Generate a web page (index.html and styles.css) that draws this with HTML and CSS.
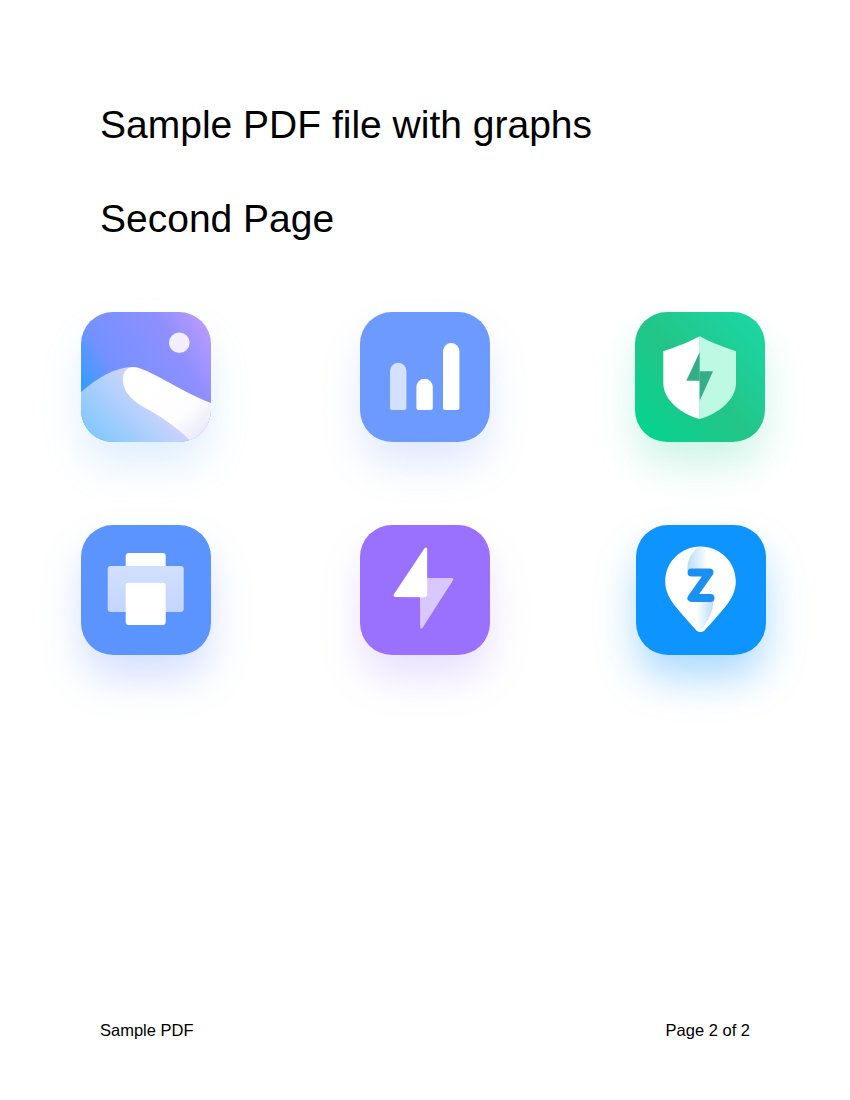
FILE: index.html
```html
<!DOCTYPE html>
<html lang="en">
<head>
<meta charset="utf-8">
<title>Sample PDF file with graphs</title>
<link rel="stylesheet" href="styles.css">
</head>
<body>
<main class="page">
  <header class="heading">
    <h1 class="title">Sample PDF file with graphs</h1>
    <h2 class="title title-second">Second Page</h2>
  </header>
  <section class="icons">
    <div class="tile tile-photo">
      <svg viewBox="0 0 130 130" class="art">
        <defs>
          <linearGradient id="skyG" x1="0" y1="70" x2="120" y2="0" gradientUnits="userSpaceOnUse">
            <stop offset="0" stop-color="#359dff"/><stop offset="0.25" stop-color="#7591ff"/><stop offset="0.72" stop-color="#8f8fff"/><stop offset="1" stop-color="#bb9bff"/>
          </linearGradient>
          <linearGradient id="duneG" x1="15" y1="125" x2="70" y2="70" gradientUnits="userSpaceOnUse">
            <stop offset="0" stop-color="#84c8ff"/><stop offset="1" stop-color="#d8d6fb"/>
          </linearGradient>
          <linearGradient id="frontG" x1="70" y1="70" x2="120" y2="125" gradientUnits="userSpaceOnUse">
            <stop offset="0" stop-color="#ffffff"/><stop offset="0.6" stop-color="#fdfdff"/><stop offset="1" stop-color="#e9e9fd"/>
          </linearGradient>
        </defs>
        <rect width="130" height="130" fill="url(#skyG)"/>
        <circle cx="98.3" cy="30.7" r="10.3" fill="#f3eefc"/>
        <path d="M0 80C16 66 34 55 52 55L90 90L120 130H0Z" fill="url(#duneG)"/>
        <path d="M52 55C66 55 100 80 130 91V130H111C96 116 84 107 68 98C52 90 42 80 42 68C42 60 46 55 52 55Z" fill="url(#frontG)"/>
      </svg>
    </div>
    <div class="tile tile-chart">
      <svg viewBox="0 0 130 130" class="art">
        <rect width="130" height="130" fill="#6d9aff"/>
        <path d="M30 59a8.2 8.2 0 0 1 16.4 0V96a2 2 0 0 1-2 2H32a2 2 0 0 1-2-2Z" fill="#d3e0ff"/>
        <path d="M56.4 75a8.2 8.2 0 0 1 16.4 0V96a2 2 0 0 1-2 2H58.4a2 2 0 0 1-2-2Z" fill="#fff"/>
        <path d="M83 39.2a8.2 8.2 0 0 1 16.4 0V96a2 2 0 0 1-2 2H85a2 2 0 0 1-2-2Z" fill="#fff"/>
      </svg>
    </div>
    <div class="tile tile-shield">
      <svg viewBox="0 0 130 130" class="art">
        <defs>
          <linearGradient id="shieldG" x1="10" y1="115" x2="125" y2="10" gradientUnits="userSpaceOnUse">
            <stop offset="0" stop-color="#08d28f"/><stop offset="0.45" stop-color="#23c588"/><stop offset="1" stop-color="#1bd6a3"/>
          </linearGradient>
        </defs>
        <rect width="130" height="130" fill="url(#shieldG)"/>
        <path d="M64.7 24.3C56 29 42 35 28.3 39.3V71C28.3 88 46 102 64.7 107Z" fill="#fff"/>
        <path d="M64.7 24.3C73 29 88 35 101 39.3V71C101 88 83 102 64.7 107Z" fill="#bdf9e3"/>
        <path d="M64.7 40L51.3 68.7H64.7Z" fill="#35ae88"/>
        <path d="M64.7 59.3H78L64.7 88.7Z" fill="#35ae88"/>
      </svg>
    </div>
    <div class="tile tile-print">
      <svg viewBox="0 0 130 130" class="art">
        <defs>
          <linearGradient id="trayG" x1="0" y1="41" x2="0" y2="87" gradientUnits="userSpaceOnUse">
            <stop offset="0" stop-color="#d2e0ff"/><stop offset="1" stop-color="#c3d5ff"/>
          </linearGradient>
        </defs>
        <rect width="130" height="130" fill="#5b94ff"/>
        <rect x="44.7" y="28" width="40" height="20" rx="3" fill="#fff"/>
        <rect x="26.7" y="41" width="76" height="46" rx="3" fill="url(#trayG)"/>
        <rect x="44.7" y="57.7" width="40" height="42.3" rx="3" fill="#fff"/>
      </svg>
    </div>
    <div class="tile tile-bolt">
      <svg viewBox="0 0 130 130" class="art">
        <rect width="130" height="130" fill="#9a71ff"/>
        <path d="M67 53H92Q94.2 53 93.2 55L62.4 103Q60.6 104.6 60.2 102.4L60 72H67Z" fill="#d9c8ff"/>
        <path d="M64.4 23.6Q67 21 67.2 24.4V70Q67.2 72.3 65 72.3L35.6 72Q32.8 71.6 33.9 69.2Z" fill="#fff"/>
      </svg>
    </div>
    <div class="tile tile-pin">
      <svg viewBox="0 0 130 130" class="art">
        <defs>
          <linearGradient id="pinTop" x1="51" y1="0" x2="72" y2="0" gradientUnits="userSpaceOnUse">
            <stop offset="0" stop-color="#b8dcfa"/><stop offset="1" stop-color="#ffffff"/>
          </linearGradient>
          <linearGradient id="pinBottom" x1="60" y1="0" x2="78" y2="0" gradientUnits="userSpaceOnUse">
            <stop offset="0" stop-color="#ffffff"/><stop offset="1" stop-color="#b8dcfa"/>
          </linearGradient>
        </defs>
        <rect width="130" height="130" fill="#0d94ff"/>
        <path d="M64.5 21.5C84 21.5 99.8 37 99.8 56.5C99.8 66 95.5 74 89.5 81.5C82.5 90 75.5 98 69 105C66.5 107.8 62.5 107.8 60 105C53.5 98 46.5 90 39.5 81.5C33.5 74 29.2 66 29.2 56.5C29.2 37 45 21.5 64.5 21.5Z" fill="#fff"/>
        <path d="M62.5 22C54 28 50.5 38 51.5 46H76C76 36 72 28 66 22Z" fill="url(#pinTop)"/>
        <path d="M60 74H77.5C77.5 88 71 98 64 106C62 106 60 105 60 105Z" fill="url(#pinBottom)"/>
        <path d="M55.5 47.5H73.5L55.5 73H74.5" class="zed"/>
      </svg>
    </div>
  </section>
  <footer class="footer">
    <span>Sample PDF</span>
    <span>Page 2 of 2</span>
  </footer>
</main>
</body>
</html>
```
FILE: styles.css
```css
html, body {
  margin: 0;
  padding: 0;
  background: #fff;
}

.page {
  width: 850px;
  height: 1100px;
  display: flex;
  flex-direction: column;
  font-family: "Liberation Sans", Arial, sans-serif;
  color: #000;
}

.heading {
  padding: 102px 100px 0;
}

.title {
  margin: 0;
  font-size: 39px;
  line-height: 46px;
  font-weight: 400;
}

.title-second {
  margin-top: 48px;
}

.icons {
  margin-top: 70px;
  padding-left: 81px;
  display: grid;
  grid-template-columns: 279px 275px 130px;
  grid-auto-rows: 130px;
  row-gap: 83px;
}

.tile {
  width: 130px;
  height: 130px;
  border-radius: 32px;
  overflow: hidden;
}

.art {
  display: block;
  width: 130px;
  height: 130px;
}

.tile-photo { box-shadow: 0 24px 42px -2px rgba(90, 170, 255, 0.2); }
.tile-chart { box-shadow: 0 24px 42px -2px rgba(100, 140, 255, 0.2); }
.tile-shield { box-shadow: 0 24px 42px -2px rgba(20, 205, 140, 0.22); }
.tile-print { box-shadow: 0 24px 42px -2px rgba(80, 130, 255, 0.26); }
.tile-bolt { box-shadow: 0 24px 42px -2px rgba(150, 110, 255, 0.22); }
.tile-pin {
  margin-left: 1px;
  box-shadow: 0 24px 42px -2px rgba(20, 150, 255, 0.36);
}

.zed {
  fill: none;
  stroke: #1a90f2;
  stroke-width: 8;
  stroke-linecap: round;
  stroke-linejoin: round;
}

.footer {
  margin-top: auto;
  padding: 0 100px 60px;
  display: flex;
  justify-content: space-between;
  font-size: 16.5px;
  line-height: 19px;
}
```
